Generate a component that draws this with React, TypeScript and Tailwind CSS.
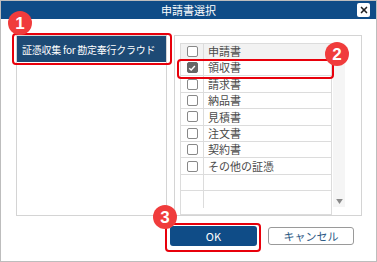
import { X } from 'lucide-react';

const rows = ['領収書', '請求書', '納品書', '見積書', '注文書', '契約書', 'その他の証憑', '', ''];

function Box({ checked }: { checked?: boolean }) {
  return (
    <span
      className={
        'flex h-[11px] w-[11px] items-center justify-center rounded-[2px] border ' +
        (checked ? 'border-[#666] bg-[#666]' : 'border-[#888] bg-white')
      }
    >
      {checked && (
        <svg viewBox="0 0 10 10" className="h-[8px] w-[8px]">
          <path d="M1.5 5.2 L4 7.6 L8.6 2.4" fill="none" stroke="#fff" strokeWidth="1.8" />
        </svg>
      )}
    </span>
  );
}

function Badge({ n, className }: { n: string; className: string }) {
  return (
    <div
      className={
        'absolute flex h-[24px] w-[24px] items-center justify-center rounded-full bg-[#f03c3c] text-[17px] font-bold leading-none text-white ' +
        className
      }
      style={{ fontFamily: '"Liberation Sans", Arial, sans-serif' }}
    >
      {n}
    </div>
  );
}

function Arrow({ up }: { up?: boolean }) {
  return (
    <svg viewBox="0 0 8 6" className="h-[5px] w-[7px]">
      <path d={up ? 'M0 6 L4 0 L8 6 Z' : 'M0 0 L8 0 L4 6 Z'} fill="#8a8a8a" />
    </svg>
  );
}

export default function App() {
  return (
    <div
      className="relative h-[262px] w-[377px] overflow-hidden border border-[#bdbdbd] bg-white"
      style={{ fontFamily: '"Noto Sans CJK JP", "Noto Sans", sans-serif' }}
    >
      {/* タイトルバー */}
      <div className="relative flex h-[18px] items-center justify-center bg-[#0f4c87] text-[11px] text-white">
        申請書選択
        <div className="absolute right-[6px] top-[2px] flex h-[14px] w-[13px] items-center justify-center rounded-[2px] bg-white">
          <X className="h-[10px] w-[10px] text-[#222]" strokeWidth={4} />
        </div>
      </div>

      {/* 本体 */}
      <div className="flex gap-[7px] pl-[15px] pt-[16px]">
        <div className="h-[181px] w-[151px] border border-[#d4d4d4]">
          <div className="flex h-[26px] items-center bg-[#1d4a75] px-[5px] text-[10px] tracking-tight text-white">
            証憑収集 for 勘定奉行クラウド
          </div>
        </div>

        <div className="flex h-[181px] w-[188px] border border-[#d4d4d4] pl-[5px] pt-[7px]">
          <div className="w-[152px] border border-[#dcdcdc] text-[11px] text-[#4a4a4a]">
            <div className="flex h-[16px] border-b border-[#dcdcdc] bg-[#f2f2f2]">
              <div className="flex w-[23px] items-center justify-center border-r border-[#dcdcdc]">
                <Box />
              </div>
              <div className="flex items-center pl-[4px]">申請書</div>
            </div>
            {rows.map((r, i) => (
              <div key={i} className="flex h-[16.4px] border-b border-[#dcdcdc] last:border-b-0">
                <div className="flex w-[23px] items-center justify-center border-r border-[#dcdcdc]">
                  {r && <Box checked={i === 0} />}
                </div>
                <div className="flex items-center pl-[4px]">{r}</div>
              </div>
            ))}
          </div>
          <div className="ml-[1px] flex h-[164px] w-[12px] flex-col items-center justify-between bg-[#f5f5f5] py-[3px]">
            <Arrow up />
            <Arrow />
          </div>
        </div>
      </div>

      {/* ボタン */}
      <div className="flex justify-end gap-[11px] pr-[22px] pt-[10px]">
        <button className="h-[20px] w-[87px] rounded-[3px] bg-[#0f4c87] text-[11px] text-white">OK</button>
        <button className="mt-[1px] h-[18px] w-[86px] rounded-[3px] border border-[#9a9a9a] bg-white text-[11px] text-[#2e5a85]">
          キャンセル
        </button>
      </div>

      {/* 注釈 */}
      <div className="absolute left-[11px] top-[32px] h-[32px] w-[160px] rounded-[4px] border-2 border-[#e8000b]" />
      <div className="absolute left-[176px] top-[58px] h-[20px] w-[157px] rounded-[4px] border-2 border-[#e8000b]" />
      <div className="absolute left-[164px] top-[222px] h-[29px] w-[96px] rounded-[4px] border-2 border-[#e8000b]" />
      <Badge n="1" className="left-[7px] top-[10px]" />
      <Badge n="2" className="left-[324px] top-[41px]" />
      <Badge n="3" className="left-[152px] top-[204px]" />
    </div>
  );
}
